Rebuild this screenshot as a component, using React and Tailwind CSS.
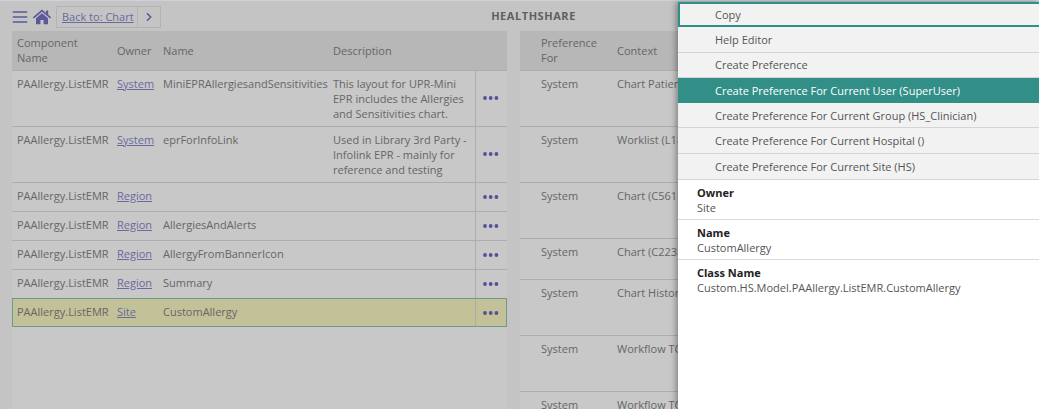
import React from "react";

const components = [
  { owner: "System", name: "MiniEPRAllergiesandSensitivities", description: "This layout for UPR-Mini EPR includes the Allergies and Sensitivities chart." },
  { owner: "System", name: "eprForInfoLink", description: "Used in Library 3rd Party - Infolink EPR - mainly for reference and testing" },
  { owner: "Region", name: "" },
  { owner: "Region", name: "AllergiesAndAlerts" },
  { owner: "Region", name: "AllergyFromBannerIcon" },
  { owner: "Region", name: "Summary" },
  { owner: "Site", name: "CustomAllergy", selected: true },
];

const preferences = [
  { context: "Chart Patient List", height: "h-14" },
  { context: "Worklist (L18)", height: "h-14" },
  { context: "Chart (C561EPR)", height: "h-14" },
  { context: "Chart (C223EPR)", height: "h-[41px]" },
  { context: "Chart History", height: "h-14" },
  { context: "Workflow TC", height: "h-14" },
  { context: "Workflow TC", height: "h-14" },
];

const actions = [
  "Copy",
  "Help Editor",
  "Create Preference",
  "Create Preference For Current User (SuperUser)",
  "Create Preference For Current Group (HS_Clinician)",
  "Create Preference For Current Hospital ()",
  "Create Preference For Current Site (HS)",
];

const details = [
  ["Owner", "Site"],
  ["Name", "CustomAllergy"],
  ["Class Name", "Custom.HS.Model.PAAllergy.ListEMR.CustomAllergy"],
];

function Toolbar() {
  return (
    <header className="relative flex h-[31px] items-center border-t border-[#ccd3d8] pt-px pl-3">
      <button type="button" aria-label="Menu" className="mr-[5px]">
        <svg width="16" height="14" viewBox="0 0 16 14" stroke="#5a5999" strokeWidth="1.4" strokeLinecap="round">
          <path d="M1.2 2H14.8M1.2 7H14.8M1.2 12H14.8" />
        </svg>
      </button>
      <a href="#home" aria-label="Home" className="mr-[5px]">
        <svg width="18" height="16" viewBox="0 0 18 16">
          <path d="M1 8.4 9 1.6 17 8.4" fill="none" stroke="#5a5999" strokeWidth="1.7" strokeLinecap="round" />
          <path d="M13 1.4h2.2v4.6L13 4.2z" fill="#5a5999" />
          <path d="M3 9.2 9 4.2l6 5V15.2h-4.4v-4.2H7.4v4.2H3z" fill="#5a5999" />
        </svg>
      </a>
      <nav className="flex h-[22px] items-stretch border border-[#b3b3b3]">
        <a href="#chart" className="flex items-center pr-[3px] pl-[5px] text-[#6a6a9c] underline">Back to: Chart</a>
        <button type="button" aria-label="Next" className="flex w-[23px] items-center justify-center border-l border-[#b3b3b3]">
          <svg width="6" height="10" viewBox="0 0 6 10" fill="none" stroke="#5a5999" strokeWidth="1.5">
            <path d="M1 1.2 4.7 5 1 8.8" />
          </svg>
        </button>
      </nav>
      <h1 className="pointer-events-none absolute inset-0 flex items-center justify-center pb-px pl-7 font-bold tracking-wider text-[#5f5f5f]">
        HEALTHSHARE
      </h1>
    </header>
  );
}

function Dots() {
  return (
    <svg width="16" height="4" viewBox="0 0 16 4" fill="#525096">
      <circle cx="2" cy="2" r="1.9" />
      <circle cx="7.7" cy="2" r="1.9" />
      <circle cx="13.4" cy="2" r="1.9" />
    </svg>
  );
}

function ComponentTable() {
  return (
    <table className="w-full table-fixed border-collapse text-left">
      <colgroup>
        <col className="w-[100px]" />
        <col className="w-[46px]" />
        <col className="w-[170px]" />
        <col />
        <col className="w-8" />
      </colgroup>
      <thead>
        <tr className="h-[39px] border-b border-[#adadad] bg-[#b7b7b7]">
          <th className="pr-6 pl-[5px] font-normal">Component Name</th>
          <th className="pl-[5px] font-normal">Owner</th>
          <th className="pl-[5px] font-normal">Name</th>
          <th className="pl-[5px] font-normal">Description</th>
          <th aria-label="Actions" />
        </tr>
      </thead>
      <tbody>
        {components.map((c, i) => (
          <tr
            key={i}
            className={
              c.selected
                ? "bg-[#c3c198] outline-1 -outline-offset-1 outline-[#6c9a8c]"
                : "border-b border-[#adadad]"
            }
          >
            <td className="pt-[5px] pb-2 pl-[5px] align-top">PAAllergy.ListEMR</td>
            <td className="pt-[5px] pl-[5px] align-top">
              <a href="#owner" className="text-[#6a6a9c] underline">{c.owner}</a>
            </td>
            <td className="pt-[5px] pl-[5px] align-top">{c.name}</td>
            <td className="py-[5px] pl-[5px] align-top">{c.description}</td>
            <td className="border-l border-[#adadad] align-middle">
              <button type="button" aria-label="Row actions" className="flex w-full justify-center">
                <Dots />
              </button>
            </td>
          </tr>
        ))}
      </tbody>
    </table>
  );
}

function PreferenceTable() {
  return (
    <table className="w-full table-fixed border-collapse text-left">
      <colgroup>
        <col className="w-[92px]" />
        <col />
      </colgroup>
      <thead>
        <tr className="h-[39px] border-b border-[#adadad] bg-[#b7b7b7]">
          <th className="pr-4 pl-[21px] font-normal">Preference For</th>
          <th className="pl-[5px] font-normal">Context</th>
        </tr>
      </thead>
      <tbody>
        {preferences.map((p, i) => (
          <tr key={i} className={`${p.height} border-b border-[#adadad]`}>
            <td className="pt-[5px] pl-[21px] align-top">System</td>
            <td className="pt-[5px] pl-[5px] align-top whitespace-nowrap">{p.context}</td>
          </tr>
        ))}
      </tbody>
    </table>
  );
}

function ActionPanel() {
  return (
    <aside className="absolute top-0.5 right-0 bottom-0 w-[361px] bg-white text-[#555] shadow-[-2px_0_6px_rgba(0,0,0,0.35)]">
      <div className="grid min-h-[178px] auto-rows-fr border-b border-[#d4d4d4] bg-[#f2f2f2]">
        {actions.map((label, i) => (
          <button
            key={label}
            type="button"
            className={
              i === 0
                ? "border-2 border-r-0 border-[#2f9087] pl-[35px] text-left"
                : i === 3
                  ? "bg-[#318f87] pl-[37px] text-left font-medium text-white"
                  : "border-b border-[#d4d4d4] pl-[37px] text-left last:border-b-0"
            }
          >
            {label}
          </button>
        ))}
      </div>
      <dl>
        {details.map(([term, value]) => (
          <div key={term} className="border-b border-[#dadada] pt-[5px] pb-1 pl-[19px] last:border-b-0">
            <dt className="font-bold text-[#222]">{term}</dt>
            <dd>{value}</dd>
          </div>
        ))}
      </dl>
    </aside>
  );
}

export default function App() {
  return (
    <div className="relative h-screen overflow-hidden bg-[#c4c4c4] font-['Open_Sans','Noto_Sans',sans-serif] text-[11px] leading-[15px] text-[#666]">
      <Toolbar />
      <main className="flex h-full gap-[13px] pl-3">
        <section className="w-[495px] shrink-0 bg-[#c8c8c8]">
          <ComponentTable />
        </section>
        <section className="min-w-0 flex-1 bg-[#c8c8c8]">
          <PreferenceTable />
        </section>
      </main>
      <ActionPanel />
    </div>
  );
}
